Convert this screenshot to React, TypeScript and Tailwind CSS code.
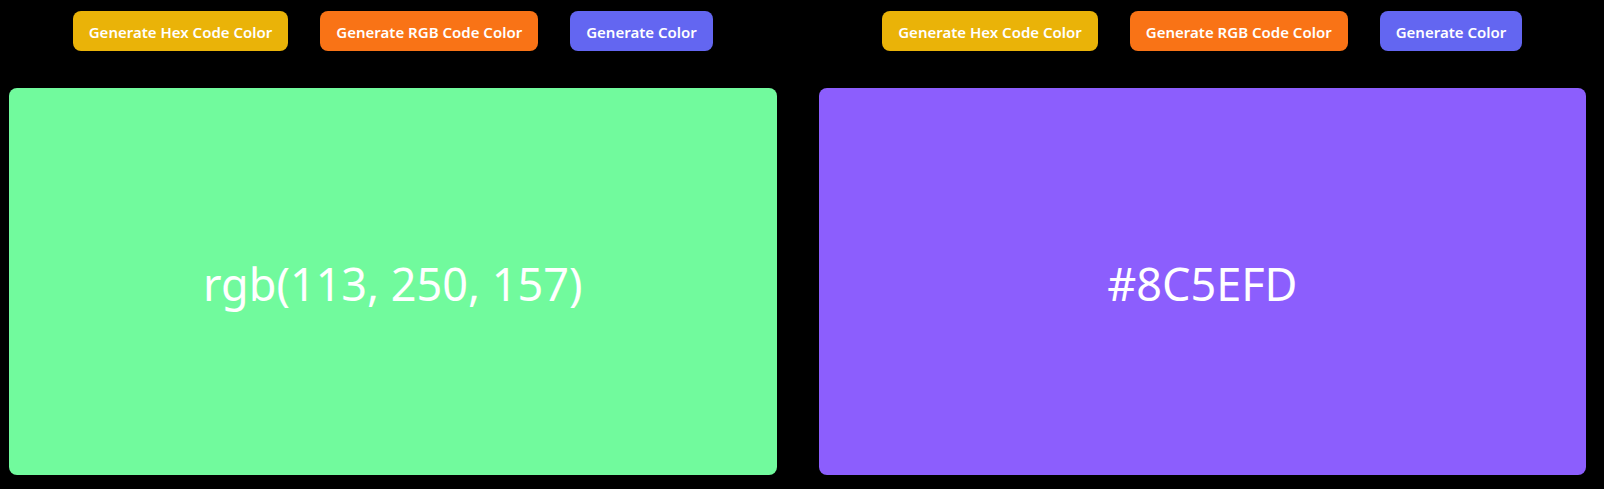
import { useState } from 'react';

type Mode = 'hex' | 'rgb';

function randomChannel() {
    return Math.floor(Math.random() * 256);
}

function ColorPanel({ initialMode, initialColor }: { initialMode: Mode; initialColor: [number, number, number] }) {
    const [mode, setMode] = useState<Mode>(initialMode);
    const [color, setColor] = useState<[number, number, number]>(initialColor);

    const hex =
        '#' +
        color
            .map(c => c.toString(16).padStart(2, '0'))
            .join('')
            .toUpperCase();
    const rgb = `rgb(${color[0]}, ${color[1]}, ${color[2]})`;

    return (
        <div className="flex flex-1 flex-col items-center gap-[37px] pt-[11px]">
            <div className="flex gap-8">
                <button
                    onClick={() => setMode('hex')}
                    className="h-10 rounded-lg bg-[#eab308] px-4 pt-[2px] text-[15px] font-semibold text-white"
                >
                    Generate Hex Code Color
                </button>
                <button
                    onClick={() => setMode('rgb')}
                    className="h-10 rounded-lg bg-[#f97316] px-4 pt-[2px] text-[15px] font-semibold text-white"
                >
                    Generate RGB Code Color
                </button>
                <button
                    onClick={() => setColor([randomChannel(), randomChannel(), randomChannel()])}
                    className="h-10 rounded-lg bg-[#6366f1] px-4 pt-[2px] text-[15px] font-semibold text-white"
                >
                    Generate Color
                </button>
            </div>
            <div
                className="flex h-[387px] w-full items-center justify-center rounded-lg pt-1 text-[45px] text-white"
                style={{ backgroundColor: rgb }}
            >
                {mode === 'rgb' ? rgb : hex}
            </div>
        </div>
    );
}

export default function App() {
    return (
        <div className="flex min-h-[489px] gap-[42px] bg-black pl-[9px] pr-[18px] font-['Segoe_UI','Noto_Sans',sans-serif]">
            <ColorPanel initialMode="rgb" initialColor={[113, 250, 157]} />
            <ColorPanel initialMode="hex" initialColor={[140, 94, 253]} />
        </div>
    );
}
